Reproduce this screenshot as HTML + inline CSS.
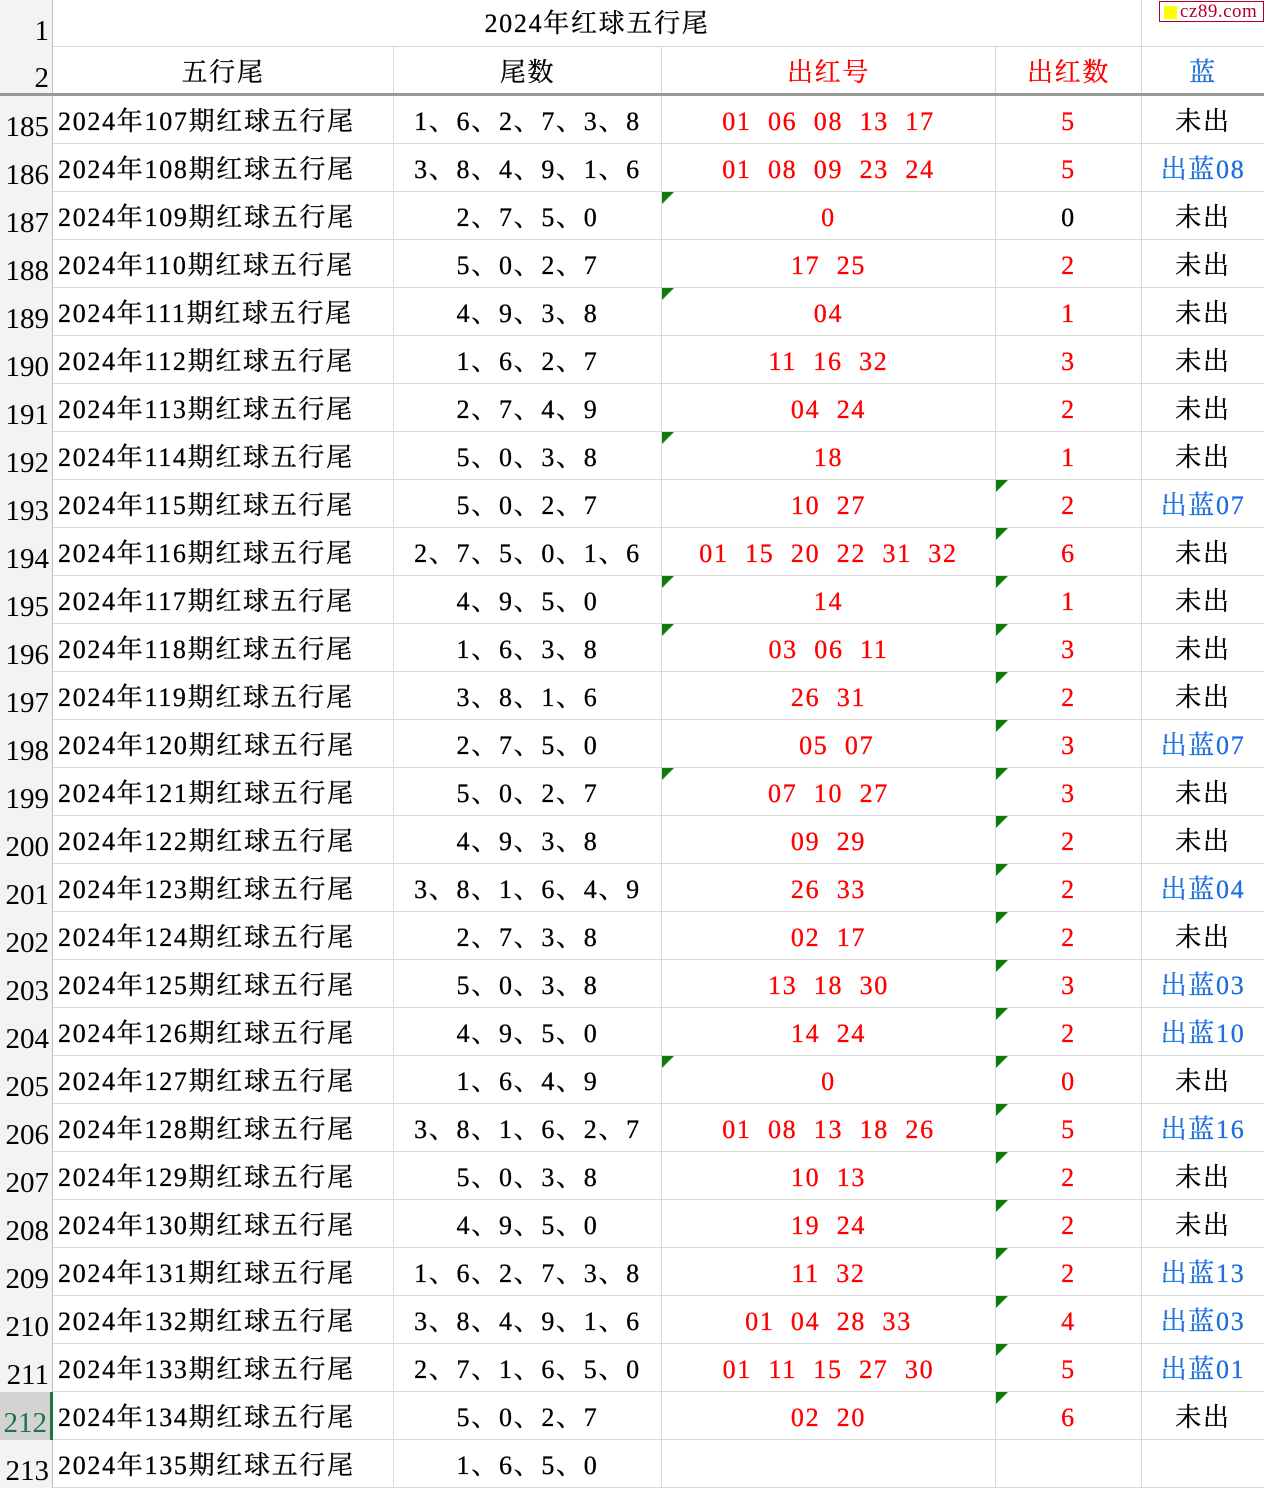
<!DOCTYPE html>
<html><head><meta charset="utf-8"><style>
*{margin:0;padding:0;box-sizing:border-box}
body{width:1264px;height:1486px;overflow:hidden;background:#fff;position:relative;font-family:"Liberation Serif","Noto Serif CJK SC",serif;color:#000}
.r{position:absolute;left:0;width:1264px;height:48px;border-bottom:1px solid #d9d9d9}
.r>div{position:absolute;top:0;height:48px;line-height:51px;font-size:26px;letter-spacing:1.7px;white-space:pre;border-right:1px solid #d9d9d9;-webkit-text-stroke:0.3px currentColor}
.n{left:0;width:53px;background:#f3f3f3;font-size:29px!important;letter-spacing:0!important;line-height:62px!important;text-align:right;padding-right:3px;border-right:1px solid #bdbdbd!important;-webkit-text-stroke:0!important}
.a{left:53px;width:341px;padding-left:5px}
.b{left:394px;width:268px;text-align:center}
.c{left:662px;width:334px;text-align:center;color:#f00}
.d{left:996px;width:146px;text-align:center;color:#f00}
.e{left:1142px;width:122px;text-align:center;border-right:none!important}
.bl{color:#1c6fdc}
.t::before{content:"";position:absolute;left:0;top:0;border-top:12px solid #0a7d0a;border-right:12px solid transparent}
</style></head><body>
<div class="r" style="top:0;height:47px"><div class="n" style="height:47px;line-height:60px">1</div><div style="left:53px;width:1089px;text-align:center;line-height:48px">2024年红球五行尾</div><div class="e" style="height:47px"></div></div>
<div style="position:absolute;left:1159px;top:1px;width:105px;height:21px;border:1px solid #b0002a;font-size:19px;line-height:19px;color:#b0002a;padding-left:20px;letter-spacing:0.5px;font-family:'Liberation Serif',serif">cz89.com</div>
<div style="position:absolute;left:1164px;top:6px;width:13px;height:13px;background:#ff0"></div>
<div class="r" style="top:47px;height:49px;border-bottom:3px solid #999"><div class="n" style="height:46px;line-height:60px">2</div><div class="a" style="text-align:center;padding:0;height:46px">五行尾</div><div class="b" style="height:46px">尾数</div><div class="c" style="height:46px">出红号</div><div class="d" style="height:46px">出红数</div><div class="e bl" style="height:46px">蓝</div></div>

<div class="r" style="top:96px"><div class="n">185</div><div class="a">2024年107期红球五行尾</div><div class="b">1、6、2、7、3、8</div><div class="c">01  06  08  13  17</div><div class="d">5</div><div class="e">未出</div></div>
<div class="r" style="top:144px"><div class="n">186</div><div class="a">2024年108期红球五行尾</div><div class="b">3、8、4、9、1、6</div><div class="c">01  08  09  23  24</div><div class="d">5</div><div class="e bl">出蓝08</div></div>
<div class="r" style="top:192px"><div class="n">187</div><div class="a">2024年109期红球五行尾</div><div class="b">2、7、5、0</div><div class="c t">0</div><div class="d" style="color:#000">0</div><div class="e">未出</div></div>
<div class="r" style="top:240px"><div class="n">188</div><div class="a">2024年110期红球五行尾</div><div class="b">5、0、2、7</div><div class="c">17  25</div><div class="d">2</div><div class="e">未出</div></div>
<div class="r" style="top:288px"><div class="n">189</div><div class="a">2024年111期红球五行尾</div><div class="b">4、9、3、8</div><div class="c t">04</div><div class="d">1</div><div class="e">未出</div></div>
<div class="r" style="top:336px"><div class="n">190</div><div class="a">2024年112期红球五行尾</div><div class="b">1、6、2、7</div><div class="c">11  16  32</div><div class="d">3</div><div class="e">未出</div></div>
<div class="r" style="top:384px"><div class="n">191</div><div class="a">2024年113期红球五行尾</div><div class="b">2、7、4、9</div><div class="c">04  24</div><div class="d">2</div><div class="e">未出</div></div>
<div class="r" style="top:432px"><div class="n">192</div><div class="a">2024年114期红球五行尾</div><div class="b">5、0、3、8</div><div class="c t">18</div><div class="d">1</div><div class="e">未出</div></div>
<div class="r" style="top:480px"><div class="n">193</div><div class="a">2024年115期红球五行尾</div><div class="b">5、0、2、7</div><div class="c">10  27</div><div class="d t">2</div><div class="e bl">出蓝07</div></div>
<div class="r" style="top:528px"><div class="n">194</div><div class="a">2024年116期红球五行尾</div><div class="b">2、7、5、0、1、6</div><div class="c">01  15  20  22  31  32</div><div class="d t">6</div><div class="e">未出</div></div>
<div class="r" style="top:576px"><div class="n">195</div><div class="a">2024年117期红球五行尾</div><div class="b">4、9、5、0</div><div class="c t">14</div><div class="d t">1</div><div class="e">未出</div></div>
<div class="r" style="top:624px"><div class="n">196</div><div class="a">2024年118期红球五行尾</div><div class="b">1、6、3、8</div><div class="c t">03  06  11</div><div class="d t">3</div><div class="e">未出</div></div>
<div class="r" style="top:672px"><div class="n">197</div><div class="a">2024年119期红球五行尾</div><div class="b">3、8、1、6</div><div class="c">26  31</div><div class="d t">2</div><div class="e">未出</div></div>
<div class="r" style="top:720px"><div class="n">198</div><div class="a">2024年120期红球五行尾</div><div class="b">2、7、5、0</div><div class="c">  05  07</div><div class="d t">3</div><div class="e bl">出蓝07</div></div>
<div class="r" style="top:768px"><div class="n">199</div><div class="a">2024年121期红球五行尾</div><div class="b">5、0、2、7</div><div class="c t">07  10  27</div><div class="d t">3</div><div class="e">未出</div></div>
<div class="r" style="top:816px"><div class="n">200</div><div class="a">2024年122期红球五行尾</div><div class="b">4、9、3、8</div><div class="c">09  29</div><div class="d t">2</div><div class="e">未出</div></div>
<div class="r" style="top:864px"><div class="n">201</div><div class="a">2024年123期红球五行尾</div><div class="b">3、8、1、6、4、9</div><div class="c">26  33</div><div class="d t">2</div><div class="e bl">出蓝04</div></div>
<div class="r" style="top:912px"><div class="n">202</div><div class="a">2024年124期红球五行尾</div><div class="b">2、7、3、8</div><div class="c">02  17</div><div class="d t">2</div><div class="e">未出</div></div>
<div class="r" style="top:960px"><div class="n">203</div><div class="a">2024年125期红球五行尾</div><div class="b">5、0、3、8</div><div class="c">13  18  30</div><div class="d t">3</div><div class="e bl">出蓝03</div></div>
<div class="r" style="top:1008px"><div class="n">204</div><div class="a">2024年126期红球五行尾</div><div class="b">4、9、5、0</div><div class="c">14  24</div><div class="d t">2</div><div class="e bl">出蓝10</div></div>
<div class="r" style="top:1056px"><div class="n">205</div><div class="a">2024年127期红球五行尾</div><div class="b">1、6、4、9</div><div class="c t">0</div><div class="d t">0</div><div class="e">未出</div></div>
<div class="r" style="top:1104px"><div class="n">206</div><div class="a">2024年128期红球五行尾</div><div class="b">3、8、1、6、2、7</div><div class="c">01  08  13  18  26</div><div class="d t">5</div><div class="e bl">出蓝16</div></div>
<div class="r" style="top:1152px"><div class="n">207</div><div class="a">2024年129期红球五行尾</div><div class="b">5、0、3、8</div><div class="c">10  13</div><div class="d t">2</div><div class="e">未出</div></div>
<div class="r" style="top:1200px"><div class="n">208</div><div class="a">2024年130期红球五行尾</div><div class="b">4、9、5、0</div><div class="c">19  24</div><div class="d t">2</div><div class="e">未出</div></div>
<div class="r" style="top:1248px"><div class="n">209</div><div class="a">2024年131期红球五行尾</div><div class="b">1、6、2、7、3、8</div><div class="c">11  32</div><div class="d t">2</div><div class="e bl">出蓝13</div></div>
<div class="r" style="top:1296px"><div class="n">210</div><div class="a">2024年132期红球五行尾</div><div class="b">3、8、4、9、1、6</div><div class="c">01  04  28  33</div><div class="d t">4</div><div class="e bl">出蓝03</div></div>
<div class="r" style="top:1344px"><div class="n">211</div><div class="a">2024年133期红球五行尾</div><div class="b">2、7、1、6、5、0</div><div class="c">01  11  15  27  30</div><div class="d t">5</div><div class="e bl">出蓝01</div></div>
<div class="r" style="top:1392px"><div class="n" style="background:#d3d3d3;color:#217346;border-right:3px solid #217346!important">212</div><div class="a">2024年134期红球五行尾</div><div class="b">5、0、2、7</div><div class="c">02  20</div><div class="d t">6</div><div class="e">未出</div></div>
<div class="r" style="top:1440px"><div class="n">213</div><div class="a">2024年135期红球五行尾</div><div class="b">1、6、5、0</div><div class="c"></div><div class="d"></div><div class="e"></div></div>
</body></html>
